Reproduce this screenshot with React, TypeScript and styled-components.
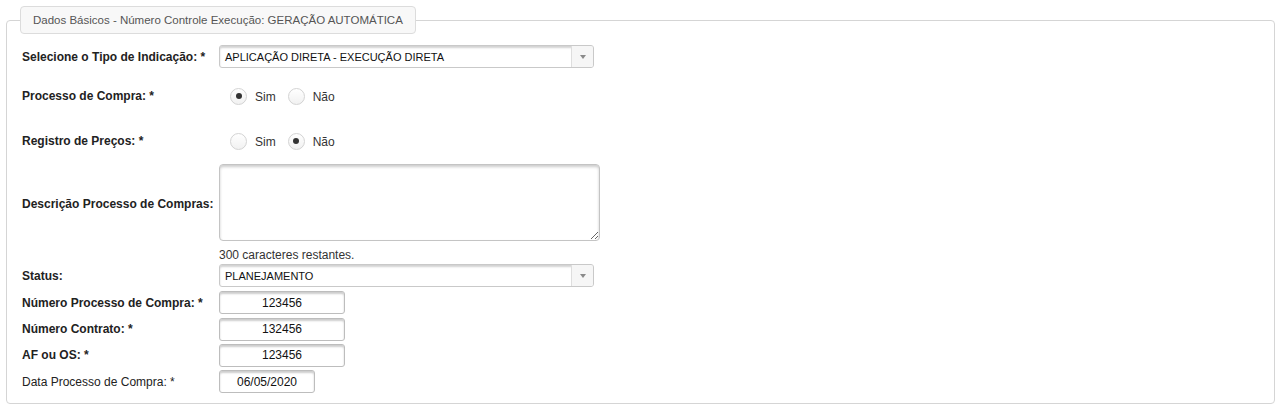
import { FC, ReactNode } from "react";
import styled, { createGlobalStyle } from "styled-components";

const GlobalStyle = createGlobalStyle`
    body {
        margin: 0;
        background: #fff;
        font-family: "Liberation Sans", Arial, sans-serif;
        font-size: 12px;
        color: #333;
    }
`;

const Page = styled.div`
    padding: 6px 8px 8px 6px;
`;

const Fieldset = styled.fieldset`
    margin: 0;
    padding: 9px 15px 8px 15px;
    border: 1px solid #d5d5d5;
    border-radius: 4px;
    min-width: 0;
`;

const Legend = styled.legend`
    margin-left: -2px;
    padding: 0 12px;
    height: 26px;
    line-height: 27px;
    border: 1px solid #dcdcdc;
    border-radius: 4px;
    background: #f8f8f8;
    color: #555;
    font-size: 11.5px;
`;

const Form = styled.div`
    display: flex;
    flex-direction: column;
`;

const Row = styled.div<{ $h: number }>`
    display: grid;
    grid-template-columns: 197px 1fr;
    align-items: center;
    height: ${p => p.$h}px;
`;

const Label = styled.label<{ $light?: boolean }>`
    font-weight: ${p => (p.$light ? "normal" : "bold")};
    color: #222;
    white-space: nowrap;
`;

const Select = styled.div`
    display: flex;
    width: 375px;
    height: 23px;
    box-sizing: border-box;
    border: 1px solid #c9c9c9;
    border-radius: 3px;
    box-shadow: inset 0 2px 2px rgba(0, 0, 0, 0.18);
    overflow: hidden;
`;

const SelectText = styled.span`
    flex: 1;
    padding-left: 5px;
    line-height: 22px;
    color: #111;
    font-size: 11px;
`;

const Arrow = styled.span`
    width: 21px;
    border-left: 1px solid #dedede;
    background: #f6f6f6;
    display: flex;
    align-items: center;
    justify-content: center;
    &::after {
        content: "";
        border-left: 3.5px solid transparent;
        border-right: 3.5px solid transparent;
        border-top: 4px solid #8a8a8a;
    }
`;

const RadioGroup = styled.div`
    display: flex;
    align-items: center;
    padding-left: 11px;
`;

const RadioItem = styled.span`
    display: flex;
    align-items: center;
    margin-right: 12px;
`;

const Circle = styled.span<{ $on?: boolean }>`
    width: 17px;
    height: 17px;
    box-sizing: border-box;
    border-radius: 50%;
    border: 1px solid #d3d3d3;
    background: linear-gradient(#ffffff, #f1f1f1);
    display: flex;
    align-items: center;
    justify-content: center;
    margin-right: 8px;
    &::after {
        content: "";
        display: ${p => (p.$on ? "block" : "none")};
        width: 6px;
        height: 6px;
        border-radius: 50%;
        background: #333;
    }
`;

const RadioText = styled.span`
    color: #333;
    padding-top: 2px;
`;

const TextArea = styled.textarea`
    width: 381px;
    height: 77px;
    box-sizing: border-box;
    border: 1px solid #c4c4c4;
    border-radius: 4px;
    box-shadow: inset 0 2px 3px rgba(0, 0, 0, 0.2);
    font-family: inherit;
    margin: 0;
`;

const Counter = styled.span`
    color: #333;
    white-space: nowrap;
`;

const Input = styled.input<{ $w: number }>`
    width: ${p => p.$w}px;
    height: 23px;
    box-sizing: border-box;
    border: 1px solid #bdbdbd;
    border-radius: 3px;
    box-shadow: inset 0 2px 2px rgba(0, 0, 0, 0.2);
    text-align: center;
    font-family: "Liberation Sans", Arial, sans-serif;
    font-size: 12px;
    color: #111;
    padding: 0;
    margin: 0;
`;

const Field: FC<{ label: string; h: number; light?: boolean; children: ReactNode }> = ({ label, h, light, children }) => (
    <Row $h={h}>
        <Label $light={light}>{label}</Label>
        <div>{children}</div>
    </Row>
);

const Radios: FC<{ yes: boolean }> = ({ yes }) => (
    <RadioGroup>
        <RadioItem>
            <Circle $on={yes} />
            <RadioText>Sim</RadioText>
        </RadioItem>
        <RadioItem>
            <Circle $on={!yes} />
            <RadioText>Não</RadioText>
        </RadioItem>
    </RadioGroup>
);

const App: FC = () => {
    return (
        <Page>
            <GlobalStyle />
            <Fieldset>
                <Legend>Dados Básicos - Número Controle Execução: GERAÇÃO AUTOMÁTICA</Legend>
                <Form>
                    <Field label="Selecione o Tipo de Indicação: *" h={27}>
                        <Select>
                            <SelectText>APLICAÇÃO DIRETA - EXECUÇÃO DIRETA</SelectText>
                            <Arrow />
                        </Select>
                    </Field>
                    <Field label="Processo de Compra: *" h={52}>
                        <Radios yes />
                    </Field>
                    <Field label="Registro de Preços: *" h={38}>
                        <Radios yes={false} />
                    </Field>
                    <Field label="Descrição Processo de Compras:" h={87}>
                        <TextArea />
                    </Field>
                    <Field label="" h={15}>
                        <Counter>300 caracteres restantes.</Counter>
                    </Field>
                    <Field label="Status:" h={27}>
                        <Select>
                            <SelectText>PLANEJAMENTO</SelectText>
                            <Arrow />
                        </Select>
                    </Field>
                    <Field label="Número Processo de Compra: *" h={27}>
                        <Input $w={126} defaultValue="123456" />
                    </Field>
                    <Field label="Número Contrato: *" h={26}>
                        <Input $w={126} defaultValue="132456" />
                    </Field>
                    <Field label="AF ou OS: *" h={26}>
                        <Input $w={126} defaultValue="123456" />
                    </Field>
                    <Field label="Data Processo de Compra: *" h={27} light>
                        <Input $w={96} defaultValue="06/05/2020" />
                    </Field>
                </Form>
            </Fieldset>
        </Page>
    );
};

export default App;
